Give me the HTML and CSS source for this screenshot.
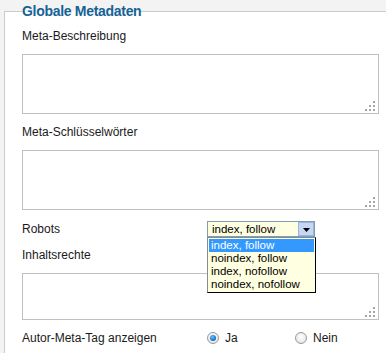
FILE: index.html
```html
<!DOCTYPE html>
<html lang="de">
<head>
<meta charset="utf-8">
<title>Globale Metadaten</title>
<link rel="stylesheet" href="styles.css">
</head>
<body>
<fieldset class="panel">
  <legend class="panel-title">Globale Metadaten</legend>
  <div class="form">
    <div class="label">Meta-Beschreibung</div>
    <div class="area area-tall"><svg class="grip" width="10" height="10" viewBox="0 0 10 10"><rect x="8" y="0" width="2" height="2"/><rect x="4" y="4" width="2" height="2"/><rect x="8" y="4" width="2" height="2"/><rect x="0" y="8" width="2" height="2"/><rect x="4" y="8" width="2" height="2"/><rect x="8" y="8" width="2" height="2"/></svg></div>
    <div class="label">Meta-Schlüsselwörter</div>
    <div class="area area-tall"><svg class="grip" width="10" height="10" viewBox="0 0 10 10"><rect x="8" y="0" width="2" height="2"/><rect x="4" y="4" width="2" height="2"/><rect x="8" y="4" width="2" height="2"/><rect x="0" y="8" width="2" height="2"/><rect x="4" y="8" width="2" height="2"/><rect x="8" y="8" width="2" height="2"/></svg></div>
    <div class="row row-top">
      <div class="row-label">Robots</div>
      <div class="select-wrap">
        <div class="select">
          <span class="select-value">index, follow</span>
          <span class="select-btn"><svg width="7" height="4" viewBox="0 0 7 4"><path d="M0 0h7L3.5 4z" fill="#000"/></svg></span>
        </div>
        <ul class="options">
          <li class="option option-active">index, follow</li>
          <li class="option">noindex, follow</li>
          <li class="option">index, nofollow</li>
          <li class="option">noindex, nofollow</li>
        </ul>
      </div>
    </div>
    <div class="label">Inhaltsrechte</div>
    <div class="area area-short"><svg class="grip" width="10" height="10" viewBox="0 0 10 10"><rect x="8" y="0" width="2" height="2"/><rect x="4" y="4" width="2" height="2"/><rect x="8" y="4" width="2" height="2"/><rect x="0" y="8" width="2" height="2"/><rect x="4" y="8" width="2" height="2"/><rect x="8" y="8" width="2" height="2"/></svg></div>
    <div class="row row-radio">
      <div class="row-label">Autor-Meta-Tag anzeigen</div>
      <div class="radio-group">
        <span class="radio radio-checked"></span><span class="radio-text">Ja</span>
      </div>
      <div class="radio-group">
        <span class="radio"></span><span class="radio-text">Nein</span>
      </div>
    </div>
  </div>
</fieldset>
</body>
</html>
```

FILE: styles.css
```css
html, body {
  margin: 0;
  padding: 0;
  overflow: hidden;
}
body {
  background: #f3f3f3;
  font-family: "Liberation Sans", Arial, sans-serif;
  font-size: 12px;
  color: #1a1a1a;
  padding-top: 3px;
}
.panel {
  box-sizing: border-box;
  margin: 0 0 0 4px;
  padding: 10px 0 20px 17px;
  width: 382px;
  border: 1px solid #cccccc;
  border-right: 0;
  background: #ffffff;
  min-width: 0;
}
.panel-title {
  padding: 0;
  font-size: 14px;
  line-height: 16px;
  font-weight: bold;
  letter-spacing: -0.3px;
  color: #146295;
}
.form {
  display: flex;
  flex-direction: column;
  gap: 11px;
}
.label {
  line-height: 14px;
  height: 14px;
}
.area {
  position: relative;
  width: 355px;
  border: 1px solid #c0c0c0;
  background: #fff;
}
.area-tall { height: 58px; }
.area-short { height: 45px; }
.grip {
  position: absolute;
  right: 3px;
  bottom: 2px;
  fill: #a6a6a6;
}
.row {
  display: flex;
  align-items: center;
  height: 16px;
}
.row-top {
  position: relative;
  z-index: 5;
}
.row-radio { height: 13px; }
.row-label {
  width: 185px;
  line-height: 14px;
}
.select-wrap {
  position: relative;
}
.select {
  box-sizing: border-box;
  width: 108px;
  height: 16px;
  border: 1px solid #7f9db9;
  background: #ffffe1;
  display: flex;
  align-items: center;
  justify-content: space-between;
  padding-left: 4px;
  font-size: 11.5px;
  color: #000;
}
.select-btn {
  box-sizing: border-box;
  width: 16px;
  height: 14px;
  background: #c5d7f2;
  border: 1px solid #9bb4d8;
  display: flex;
  align-items: center;
  justify-content: center;
  padding-top: 2px;
}
.options {
  position: absolute;
  left: 0;
  top: 16px;
  margin: 0;
  padding: 1px;
  list-style: none;
  width: 105px;
  background: #ffffe1;
  border: 1px solid #000;
  border-left-color: #8a8a8a;
  border-top-color: #8a8a8a;
  font-size: 11.5px;
}
.option {
  height: 13px;
  line-height: 13px;
  padding-left: 2px;
  color: #000;
}
.option-active {
  background: #3399ff;
  color: #fff;
}
.radio-group {
  display: flex;
  align-items: center;
  width: 88px;
}
.radio {
  box-sizing: border-box;
  width: 12px;
  height: 12px;
  border-radius: 50%;
  border: 1px solid #9a9a9a;
  background: radial-gradient(circle at 50% 40%, #ffffff 0%, #ececec 60%, #d6d6d6 100%);
  position: relative;
}
.radio-checked::after {
  content: "";
  position: absolute;
  left: 2px;
  top: 2px;
  width: 6px;
  height: 6px;
  border-radius: 50%;
  background: radial-gradient(circle at 40% 35%, #6fc3ff 0%, #1b7fd6 55%, #0b3e7a 100%);
}
.radio-text {
  margin-left: 6px;
  line-height: 14px;
}
```
